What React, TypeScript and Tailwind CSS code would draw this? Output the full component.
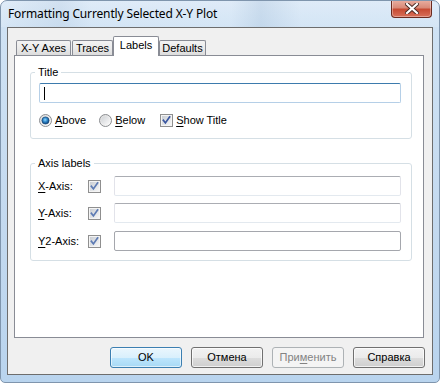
import React from "react";

function Radio({ checked }: { checked?: boolean }) {
  return (
    <svg width="13" height="13" viewBox="0 0 13 13" className="shrink-0">
      <defs>
        <linearGradient id="rOuter" x1="0" y1="0" x2="1" y2="1">
          <stop offset="0" stopColor="#d8d8d8" />
          <stop offset="1" stopColor="#ffffff" />
        </linearGradient>
        <linearGradient id="rInner" x1="0" y1="0" x2="1" y2="1">
          <stop offset="0" stopColor="#cfd2d6" />
          <stop offset="1" stopColor="#fafafa" />
        </linearGradient>
        <radialGradient id="rDot" cx="0.45" cy="0.4" r="0.6">
          <stop offset="0" stopColor="#8fd8ff" />
          <stop offset="0.5" stopColor="#2f86c8" />
          <stop offset="1" stopColor="#0c3f78" />
        </radialGradient>
      </defs>
      <circle cx="6.5" cy="6.5" r="6" fill="url(#rOuter)" stroke="#8a8d91" />
      <circle cx="6.5" cy="6.5" r="4.3" fill="url(#rInner)" />
      {checked && <circle cx="6.5" cy="6.5" r="3.6" fill="url(#rDot)" stroke="#0f3f70" strokeWidth="0.6" />}
    </svg>
  );
}

function Check({ dim }: { dim?: boolean }) {
  return (
    <svg width="13" height="13" viewBox="0 0 13 13" className="shrink-0">
      <defs>
        <linearGradient id="cInner" x1="0" y1="0" x2="1" y2="1">
          <stop offset="0" stopColor="#c9cdd3" />
          <stop offset="1" stopColor="#f6f6f6" />
        </linearGradient>
      </defs>
      <rect x="0.5" y="0.5" width="12" height="12" fill="#f4f4f4" stroke="#8f8f8f" />
      <rect x="2" y="2" width="9" height="9" fill="url(#cInner)" />
      <path
        d="M3.4 6.3 L5.4 8.9 L9.6 2.9"
        fill="none"
        stroke={dim ? "#5d7bb4" : "#3a56a0"}
        strokeWidth="1.7"
        strokeLinecap="square"
      />
    </svg>
  );
}

function Btn({
  children,
  variant,
}: {
  children: React.ReactNode;
  variant?: "default" | "disabled";
}) {
  if (variant === "default")
    return (
      <div className="w-[72px] h-[21px] rounded-[3px] border border-[#3c7fb1] bg-[linear-gradient(180deg,#eaf6fd_0%,#d9f0fc_50%,#bee6fd_50%,#a7d9f5_100%)] shadow-[inset_0_0_0_1px_rgba(255,255,255,0.6)] flex items-center justify-center text-black">
        {children}
      </div>
    );
  if (variant === "disabled")
    return (
      <div className="w-[72px] h-[21px] rounded-[3px] border border-[#adb2b5] bg-[#f4f4f4] flex items-center justify-center text-[#838383]">
        {children}
      </div>
    );
  return (
    <div className="w-[72px] h-[21px] rounded-[3px] border border-[#707070] bg-[linear-gradient(180deg,#f2f2f2_0%,#ebebeb_50%,#dddddd_50%,#cfcfcf_100%)] shadow-[inset_0_0_0_1px_rgba(255,255,255,0.7)] flex items-center justify-center text-black">
      {children}
    </div>
  );
}

function U({ children }: { children: React.ReactNode }) {
  return <span className="underline underline-offset-[2px]">{children}</span>;
}

export default function App() {
  return (
    <div className="w-[440px] h-[383px] flex flex-col rounded-t-[7px] rounded-b-[5px] border border-[#7f95ad] bg-[linear-gradient(180deg,#dbe9f7_0px,#cfe2f4_26px,#c3d9ef_60%,#b9d4ee_100%)] overflow-hidden font-['Liberation_Sans',Arial,sans-serif] text-[11px] text-black">
      {/* title bar */}
      <div className="h-[26px] flex items-start justify-between shrink-0 bg-[linear-gradient(90deg,rgba(255,255,255,0.15)_0px,rgba(180,200,220,0.25)_60px,rgba(255,255,255,0.1)_90px,rgba(255,255,255,0.1)_230px,rgba(160,185,210,0.25)_260px,rgba(255,255,255,0.1)_300px)]">
        <div className="pl-[7px] pt-[5px] text-[12px] leading-[16px] font-['Noto_Sans',sans-serif] text-black tracking-[-0.15px]">
          Formatting Currently Selected X-Y Plot
        </div>
        <div className="-mt-[1px] mr-[7px] w-[41px] h-[18px] rounded-b-[4px] border border-[#6b2a1f] border-t-0 bg-[linear-gradient(180deg,#eab0a2_0%,#d98a78_45%,#c74b33_55%,#d8705a_100%)] shadow-[inset_0_0_0_1px_rgba(255,255,255,0.35)] flex items-center justify-center">
          <svg width="14" height="11" viewBox="0 0 14 11">
            <path d="M2 1 L12 10 M12 1 L2 10" stroke="#4a2a24" strokeWidth="4" strokeLinecap="square" />
            <path d="M2 1 L12 10 M12 1 L2 10" stroke="#ffffff" strokeWidth="2.2" strokeLinecap="square" />
          </svg>
        </div>
      </div>

      {/* client */}
      <div className="ml-[6px] w-[426px] h-[348px] border border-[#6d6d6d] bg-[#f0f0f0] flex flex-col pl-[6px] pt-[8px]">
        {/* tabs */}
        <div className="flex items-end h-[20px] pl-[2px]">
          <div className="w-[55px] h-[15px] mb-[1px] border border-b-0 border-[#898c95] rounded-t-[2px] bg-[linear-gradient(180deg,#f3f3f3_0%,#ebebeb_50%,#dcdcdc_100%)] flex items-center justify-center leading-[13px]">
            X-Y Axes
          </div>
          <div className="ml-[1px] w-[41px] h-[15px] mb-[1px] border border-b-0 border-[#898c95] rounded-t-[2px] bg-[linear-gradient(180deg,#f3f3f3_0%,#ebebeb_50%,#dcdcdc_100%)] flex items-center justify-center leading-[13px]">
            Traces
          </div>
          <div className="relative z-10 w-[46px] h-[20px] border border-b-0 border-[#898c95] rounded-t-[2px] bg-white flex justify-center pt-[2px] leading-[13px]">
            Labels
          </div>
          <div className="w-[47px] h-[15px] mb-[1px] border border-b-0 border-[#898c95] rounded-t-[2px] bg-[linear-gradient(180deg,#f3f3f3_0%,#ebebeb_50%,#dcdcdc_100%)] flex items-center justify-center leading-[13px]">
            Defaults
          </div>
        </div>

        {/* panel */}
        <div className="-mt-[1px] w-[410px] h-[283px] border border-[#898c95] bg-white pt-[9px] pl-[15px] flex flex-col">
          <fieldset className="w-[382px] m-0 p-0 border border-[#d5dfe5] rounded-[3px] pl-[8px] pr-[10px] pb-[11px]">
            <legend className="-ml-[4px] px-[3px] leading-[15px]">Title</legend>
            <div className="mt-[3px] w-[362px] h-[20px] rounded-[2px] border border-[#b5cfe7] border-t-[#3d7bad] bg-white flex items-center pl-[4px]">
              <div className="w-px h-[13px] bg-black" />
            </div>
            <div className="mt-[11px] h-[13px] flex items-center leading-[13px]">
              <Radio checked />
              <span className="ml-[3px]">
                <U>A</U>bove
              </span>
              <span className="ml-[13px]">
                <Radio />
              </span>
              <span className="ml-[3px]">
                <U>B</U>elow
              </span>
              <span className="ml-[15px] flex">
                <Check />
              </span>
              <span className="ml-[3px]">
                <U>S</U>how Title
              </span>
            </div>
          </fieldset>

          <fieldset className="mt-[17px] w-[382px] m-0 p-0 border border-[#d5dfe5] rounded-[3px] pl-[7px] pr-[10px] pb-[9px]">
            <legend className="-ml-[3px] px-[3px] leading-[15px]">Axis labels</legend>
            <div className="mt-[5px] h-[20px] flex items-center">
              <span className="w-[50px]">
                <U>X</U>-Axis:
              </span>
              <Check dim />
              <div className="ml-[13px] w-[287px] h-[20px] rounded-[2px] border border-[#e2e3ea] border-t-[#abadb3] border-b-[#e3e9ef] bg-white" />
            </div>
            <div className="mt-[7px] h-[20px] flex items-center">
              <span className="w-[50px]">
                <U>Y</U>-Axis:
              </span>
              <Check dim />
              <div className="ml-[13px] w-[287px] h-[20px] rounded-[2px] border border-[#e2e3ea] border-t-[#abadb3] border-b-[#e3e9ef] bg-white" />
            </div>
            <div className="mt-[8px] h-[20px] flex items-center">
              <span className="w-[50px]">
                <U>Y</U>2-Axis:
              </span>
              <Check dim />
              <div className="ml-[13px] w-[287px] h-[20px] rounded-[2px] border border-[#a5a7ad] bg-white" />
            </div>
          </fieldset>
        </div>

        {/* buttons */}
        <div className="mt-[9px] flex justify-end gap-[9px] pr-[7px]">
          <Btn variant="default">OK</Btn>
          <Btn>Отмена</Btn>
          <Btn variant="disabled">
            При<U>м</U>енить
          </Btn>
          <Btn>Справка</Btn>
        </div>
      </div>
    </div>
  );
}
